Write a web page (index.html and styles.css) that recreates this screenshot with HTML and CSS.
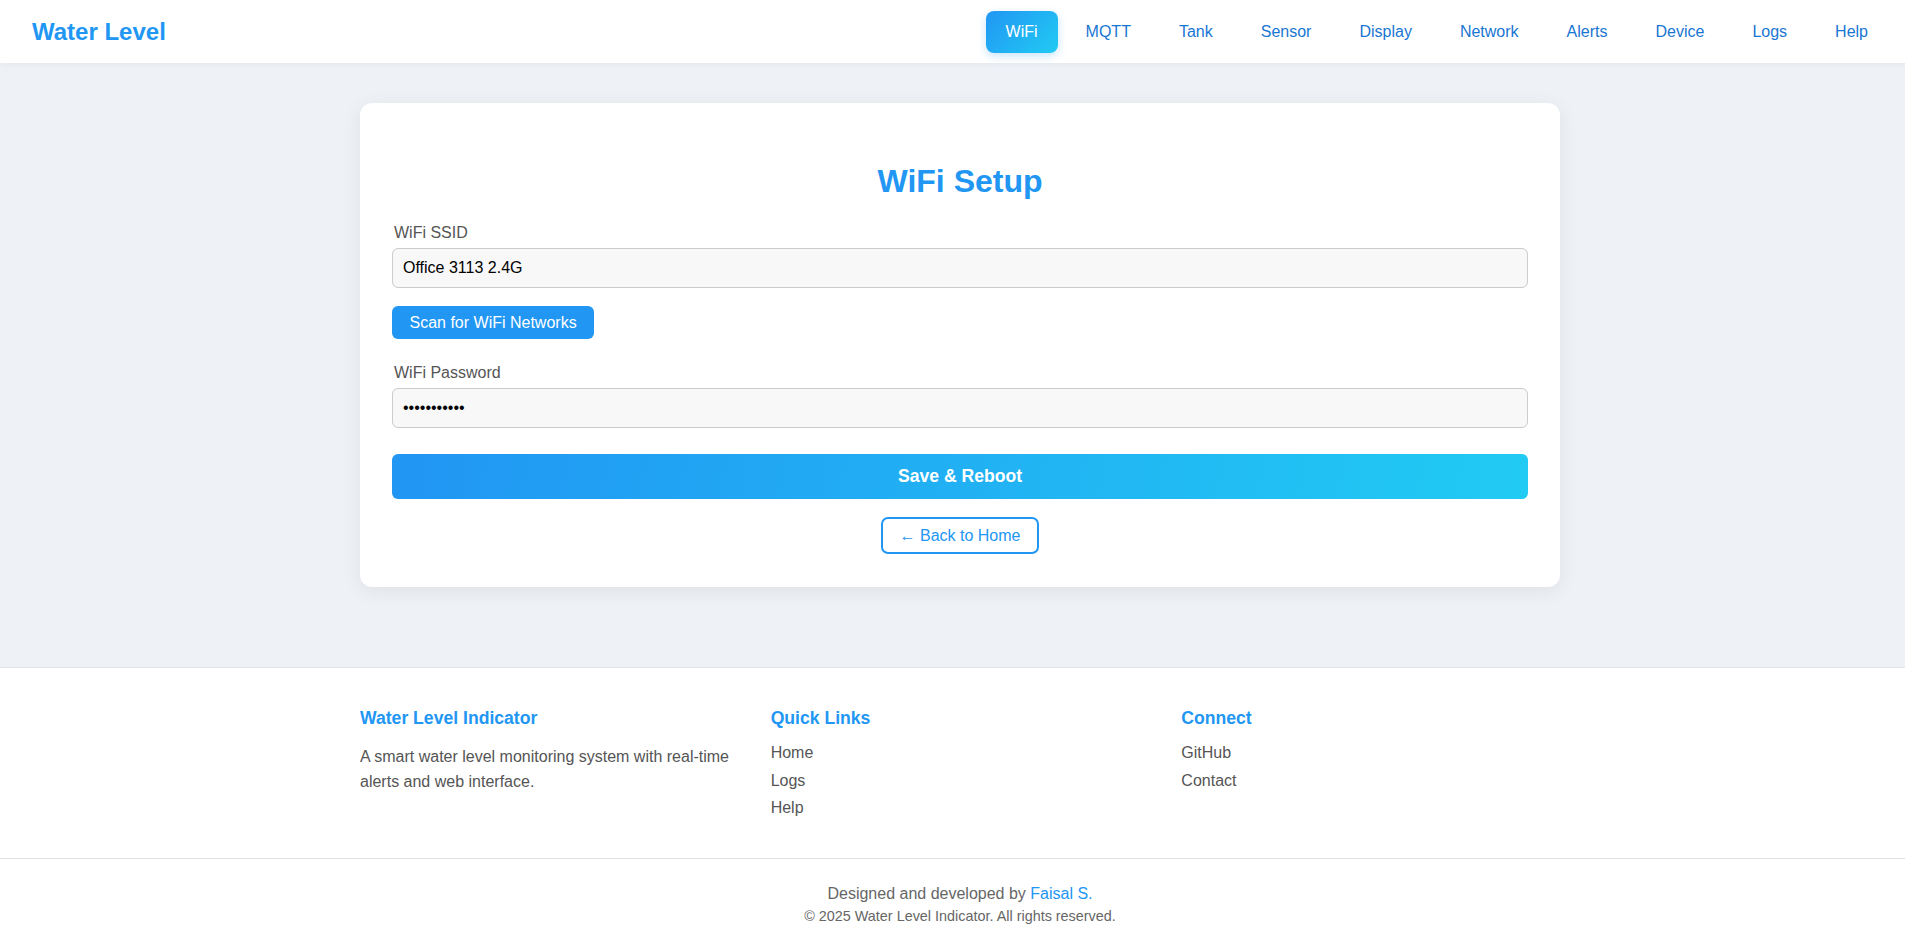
FILE: index.html
```html
<!DOCTYPE html>
<html lang="en">
<head>
<meta charset="utf-8">
<title>WiFi Setup - Water Level</title>
<link rel="stylesheet" href="styles.css">
</head>
<body>
<div class="page">
  <header class="topbar">
    <a class="brand" href="#">Water Level</a>
    <nav class="nav">
      <a class="nav-link active" href="#">WiFi</a>
      <a class="nav-link" href="#">MQTT</a>
      <a class="nav-link" href="#">Tank</a>
      <a class="nav-link" href="#">Sensor</a>
      <a class="nav-link" href="#">Display</a>
      <a class="nav-link" href="#">Network</a>
      <a class="nav-link" href="#">Alerts</a>
      <a class="nav-link" href="#">Device</a>
      <a class="nav-link" href="#">Logs</a>
      <a class="nav-link" href="#">Help</a>
    </nav>
  </header>

  <main class="main">
    <section class="card">
      <h2 class="card-title">WiFi Setup</h2>
      <form class="form">
        <label class="field-label" for="ssid">WiFi SSID</label>
        <input class="field-input" id="ssid" type="text" value="Office 3113 2.4G">
        <button class="btn-scan" type="button">Scan for WiFi Networks</button>
        <label class="field-label label-pass" for="pass">WiFi Password</label>
        <input class="field-input" id="pass" type="password" value="12345678901">
        <button class="btn-save" type="button">Save &amp; Reboot</button>
        <div class="back-row">
          <a class="btn-back" href="#">← Back to Home</a>
        </div>
      </form>
    </section>
  </main>

  <footer class="footer">
    <div class="footer-inner">
      <div class="footer-col">
        <h3 class="footer-title">Water Level Indicator</h3>
        <p class="footer-text">A smart water level monitoring system with real-time alerts and web interface.</p>
      </div>
      <div class="footer-col">
        <h3 class="footer-title">Quick Links</h3>
        <ul class="footer-links">
          <li><a href="#">Home</a></li>
          <li><a href="#">Logs</a></li>
          <li><a href="#">Help</a></li>
        </ul>
      </div>
      <div class="footer-col">
        <h3 class="footer-title">Connect</h3>
        <ul class="footer-links">
          <li><a href="#">GitHub</a></li>
          <li><a href="#">Contact</a></li>
        </ul>
      </div>
    </div>
    <div class="footer-bottom">
      <p class="credit">Designed and developed by <a href="#">Faisal S.</a></p>
      <p class="copyright">© 2025 Water Level Indicator. All rights reserved.</p>
    </div>
  </footer>
</div>
</body>
</html>
```

FILE: styles.css
```css
html {
  overflow-x: hidden;
}

body {
  margin: 0;
  font-family: "Liberation Sans", Arial, Helvetica, sans-serif;
  font-size: 16px;
  color: #333;
  background: #eef2f7;
}

a {
  text-decoration: none;
}

.page {
  width: 1920px;
}

/* Header */
.topbar {
  display: flex;
  align-items: center;
  justify-content: space-between;
  height: 63px;
  box-sizing: border-box;
  padding: 0 32px;
  background: #ffffff;
  box-shadow: 0 2px 6px rgba(0, 0, 0, 0.04);
  position: relative;
}

.brand {
  font-size: 24px;
  font-weight: bold;
  color: #2196f3;
}

.nav {
  display: flex;
  align-items: center;
  gap: 8px;
}

.nav-link {
  display: block;
  padding: 12px 20px;
  line-height: 18px;
  font-size: 16px;
  color: #1976d2;
  border-radius: 8px;
}

.nav-link.active {
  color: #ffffff;
  background: linear-gradient(135deg, #2196f3 0%, #21cbf3 100%);
  box-shadow: 0 3px 8px rgba(33, 150, 243, 0.25);
}

/* Main */
.main {
  padding: 40px 0 80px;
}

.card {
  width: 1200px;
  box-sizing: border-box;
  margin: 0 auto;
  padding: 32px 32px 32.7px;
  background: #ffffff;
  border-radius: 12px;
  box-shadow: 0 4px 20px rgba(0, 0, 0, 0.07);
}

.card-title {
  margin: 27.7px 0 23.5px;
  font-size: 32px;
  line-height: 37px;
  font-weight: bold;
  color: #2196f3;
  text-align: center;
}

.form {
  display: flex;
  flex-direction: column;
  align-items: flex-start;
}

.field-label {
  display: block;
  font-size: 16px;
  line-height: 18.4px;
  color: #555;
  margin: 0.6px 0 6.1px 2px;
}

.label-pass {
  margin-top: 24.6px;
}

.field-input {
  width: 100%;
  height: 39.3px;
  box-sizing: border-box;
  padding: 0 10px;
  font-family: "Liberation Sans", Arial, Helvetica, sans-serif;
  font-size: 16px;
  color: #000;
  background: #f8f8f8;
  border: 1px solid #cccccc;
  border-radius: 6px;
  outline: none;
}

.btn-scan {
  margin-top: 18.5px;
  height: 33.3px;
  padding: 0 17.5px;
  font-family: "Liberation Sans", Arial, Helvetica, sans-serif;
  font-size: 16px;
  color: #ffffff;
  background: #2196f3;
  border: none;
  border-radius: 6px;
}

.btn-save {
  width: 100%;
  height: 44.7px;
  margin-top: 26.3px;
  font-family: "Liberation Sans", Arial, Helvetica, sans-serif;
  font-size: 17.6px;
  font-weight: bold;
  color: #ffffff;
  background: linear-gradient(100deg, #2196f3 0%, #21cbf3 100%);
  border: none;
  border-radius: 6px;
}

.back-row {
  width: 100%;
  display: flex;
  justify-content: center;
  margin-top: 18px;
}

.btn-back {
  display: block;
  box-sizing: border-box;
  height: 37.6px;
  padding: 0 17px;
  line-height: 33.6px;
  font-size: 16px;
  color: #2196f3;
  border: 2px solid #2196f3;
  border-radius: 7px;
}

/* Footer */
.footer {
  background: #ffffff;
  border-top: 1px solid #e2e5ea;
  padding-top: 40px;
}

.footer-inner {
  width: 1200px;
  margin: 0 auto;
  display: grid;
  grid-template-columns: repeat(3, 1fr);
  gap: 32px;
}

.footer-title {
  margin: 0 0 15.5px;
  font-size: 17.6px;
  line-height: 20.2px;
  font-weight: bold;
  color: #2196f3;
}

.footer-text {
  margin: 0;
  font-size: 16px;
  line-height: 25.6px;
  color: #555;
}

.footer-links {
  list-style: none;
  margin: 0;
  padding: 0;
  display: flex;
  flex-direction: column;
  gap: 9.4px;
}

.footer-links li {
  line-height: 18.4px;
}

.footer-links a {
  color: #555;
}

.footer-bottom {
  margin-top: 40.5px;
  border-top: 1px solid #e0e0e0;
  padding: 25.5px 0 24px;
  text-align: center;
  color: #666;
}

.credit {
  margin: 0 0 4.8px;
  font-size: 16px;
  line-height: 18.4px;
}

.credit a {
  color: #2196f3;
}

.copyright {
  margin: 0;
  font-size: 14.4px;
  line-height: 16.6px;
}
```
